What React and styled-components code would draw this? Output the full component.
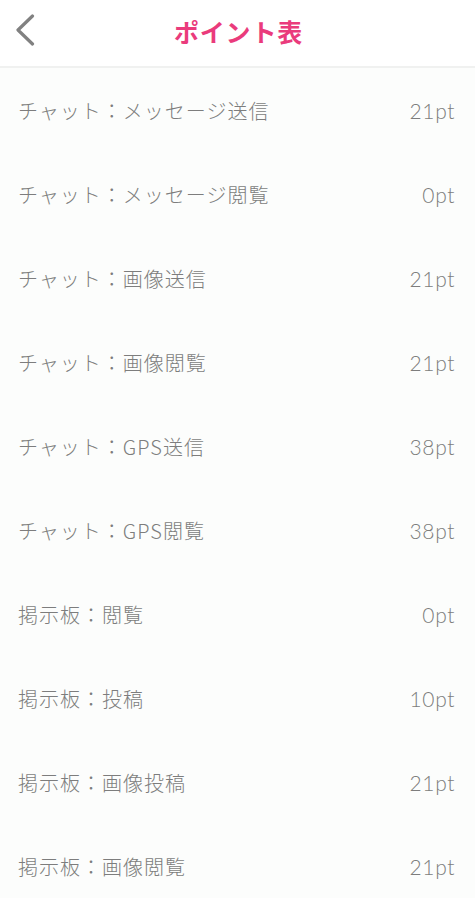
import React from "react";
import styled, { createGlobalStyle } from "styled-components";

const GlobalStyle = createGlobalStyle`
  body {
    margin: 0;
    background: #fcfdfc;
    font-family: "Noto Sans CJK JP", "Noto Sans", sans-serif;
  }
`;

const ROWS = [
  { label: "チャット：メッセージ送信", pt: 21 },
  { label: "チャット：メッセージ閲覧", pt: 0 },
  { label: "チャット：画像送信", pt: 21 },
  { label: "チャット：画像閲覧", pt: 21 },
  { label: "チャット：GPS送信", pt: 38 },
  { label: "チャット：GPS閲覧", pt: 38 },
  { label: "掲示板：閲覧", pt: 0 },
  { label: "掲示板：投稿", pt: 10 },
  { label: "掲示板：画像投稿", pt: 21 },
  { label: "掲示板：画像閲覧", pt: 21 },
];

const Page = () => {
  return (
    <Wrapper>
      <GlobalStyle />
      <Header>
        <BackButton aria-label="back">
          <svg width="20" height="32" viewBox="0 0 20 32">
            <path
              d="M17.5 2 L3 16 L17.5 30"
              fill="none"
              stroke="#818181"
              strokeWidth="3.2"
              strokeLinecap="round"
              strokeLinejoin="round"
            />
          </svg>
        </BackButton>
        <Title>ポイント表</Title>
      </Header>
      <List>
        {ROWS.map((row) => (
          <Row key={row.label}>
            <Label>{row.label}</Label>
            <Points>{row.pt}pt</Points>
          </Row>
        ))}
      </List>
    </Wrapper>
  );
};

const Wrapper = styled.div`
  width: 475px;
  height: 898px;
  overflow: hidden;
`;

const Header = styled.header`
  height: 66px;
  background: #ffffff;
  border-bottom: 2px solid #f0f1f0;
  display: flex;
  align-items: center;
  justify-content: center;
  position: relative;
`;

const BackButton = styled.button`
  position: absolute;
  left: 15px;
  top: 14px;
  border: none;
  background: none;
  padding: 0;
  display: flex;
`;

const Title = styled.h1`
  margin: 0;
  font-size: 25px;
  font-weight: 700;
  color: #ea3b7c;
  letter-spacing: 0.8px;
  margin-top: -4px;
  margin-left: 2px;
`;

const List = styled.ul`
  list-style: none;
  margin: 0;
  padding: 0;
`;

const Row = styled.li`
  height: 84px;
  display: flex;
  align-items: center;
  justify-content: space-between;
  padding: 0 20px 0 18px;
  color: #7d7d7d;
  font-size: 20px;
  font-weight: 300;
`;

const Label = styled.span`
  letter-spacing: 1px;
`;

const Points = styled.span`
  font-family: Lato, "Noto Sans", sans-serif;
  font-size: 21px;
  font-weight: 300;
  letter-spacing: 0.6px;
`;

export default Page;
